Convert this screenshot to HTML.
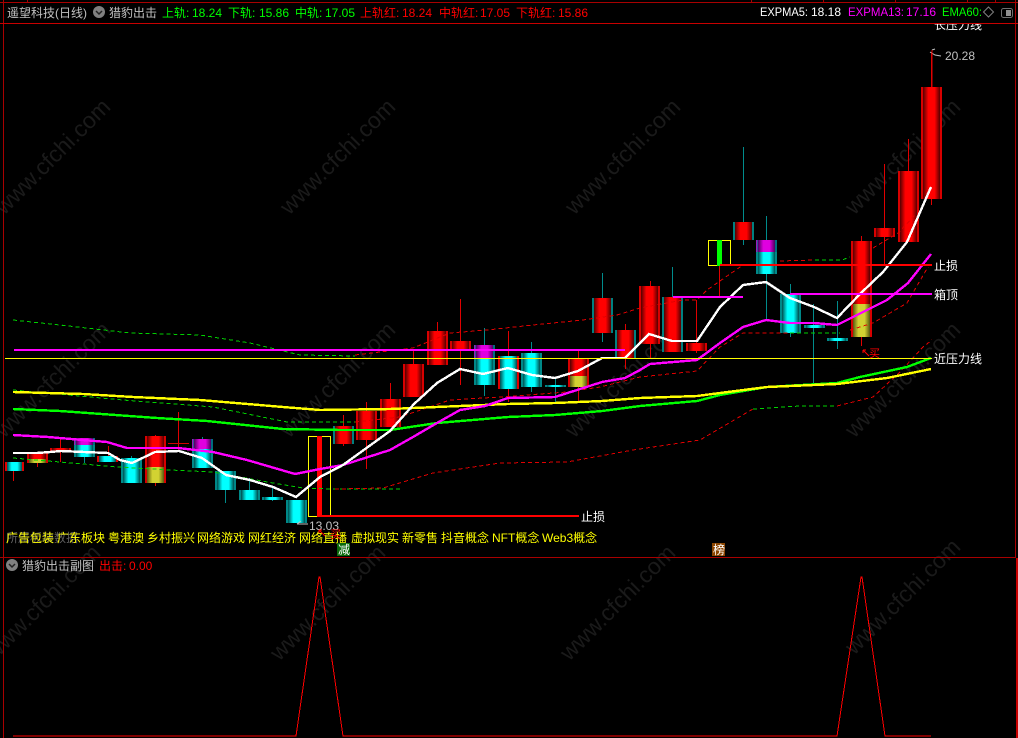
<!DOCTYPE html>
<html><head><meta charset="utf-8"><style>
html,body{margin:0;padding:0;background:#000;width:1018px;height:738px;overflow:hidden}
svg{position:absolute;left:0;top:0;display:block}
text{font-family:"Liberation Sans","WenQuanYi Zen Hei","Noto Sans CJK SC",sans-serif;font-size:12px;white-space:pre}
.wm text{font-size:23px;fill:#1a1a1a;letter-spacing:0}
.l{fill:none;shape-rendering:crispEdges}
.d{fill:none;stroke-width:1;stroke-dasharray:4 3;shape-rendering:crispEdges}
#c rect{shape-rendering:crispEdges}
.w{stroke-width:1;shape-rendering:crispEdges}
</style></head><body>
<svg width="1018" height="738" viewBox="0 0 1018 738" xmlns="http://www.w3.org/2000/svg">
<defs>
<linearGradient id="r"><stop offset="0" stop-color="#d80000"/><stop offset=".095" stop-color="#d80000"/><stop offset=".1" stop-color="#580000"/><stop offset=".35" stop-color="#ff0000"/><stop offset=".65" stop-color="#ff0000"/><stop offset=".9" stop-color="#580000"/><stop offset=".905" stop-color="#d80000"/><stop offset="1" stop-color="#d80000"/></linearGradient>
<linearGradient id="t"><stop offset="0" stop-color="#008080"/><stop offset=".095" stop-color="#008080"/><stop offset=".1" stop-color="#580000"/><stop offset=".35" stop-color="#ff0000"/><stop offset=".65" stop-color="#ff0000"/><stop offset=".9" stop-color="#580000"/><stop offset=".905" stop-color="#008080"/><stop offset="1" stop-color="#008080"/></linearGradient>
<linearGradient id="c"><stop offset="0" stop-color="#008888"/><stop offset=".095" stop-color="#008888"/><stop offset=".1" stop-color="#005050"/><stop offset=".35" stop-color="#00ffff"/><stop offset=".65" stop-color="#00ffff"/><stop offset=".9" stop-color="#005050"/><stop offset=".905" stop-color="#008888"/><stop offset="1" stop-color="#008888"/></linearGradient>
<linearGradient id="x"><stop offset="0" stop-color="#e00000"/><stop offset=".095" stop-color="#e00000"/><stop offset=".1" stop-color="#005050"/><stop offset=".35" stop-color="#00ffff"/><stop offset=".65" stop-color="#00ffff"/><stop offset=".9" stop-color="#005050"/><stop offset=".905" stop-color="#e00000"/><stop offset="1" stop-color="#e00000"/></linearGradient>
<linearGradient id="o"><stop offset="0" stop-color="#d80000"/><stop offset=".095" stop-color="#d80000"/><stop offset=".1" stop-color="#5a5a10"/><stop offset=".35" stop-color="#d2d232"/><stop offset=".65" stop-color="#d2d232"/><stop offset=".9" stop-color="#5a5a10"/><stop offset=".905" stop-color="#d80000"/><stop offset="1" stop-color="#d80000"/></linearGradient>
<linearGradient id="m"><stop offset="0" stop-color="#d000d0"/><stop offset=".095" stop-color="#006c80"/><stop offset=".1" stop-color="#500060"/><stop offset=".35" stop-color="#e000e0"/><stop offset=".65" stop-color="#e000e0"/><stop offset=".9" stop-color="#500060"/><stop offset=".905" stop-color="#006c80"/><stop offset="1" stop-color="#006c80"/></linearGradient>
</defs>
<rect width="1018" height="738" fill="#000"/>

<!-- watermark -->
<g class="wm" text-anchor="middle">
<text transform="translate(58,162) rotate(-45)">www.cfchi.com</text>
<text transform="translate(343,162) rotate(-45)">www.cfchi.com</text>
<text transform="translate(628,162) rotate(-45)">www.cfchi.com</text>
<text transform="translate(908,162) rotate(-45)">www.cfchi.com</text>
<text transform="translate(58,385) rotate(-45)">www.cfchi.com</text>
<text transform="translate(343,385) rotate(-45)">www.cfchi.com</text>
<text transform="translate(628,385) rotate(-45)">www.cfchi.com</text>
<text transform="translate(908,385) rotate(-45)">www.cfchi.com</text>
<text transform="translate(48,608) rotate(-45)">www.cfchi.com</text>
<text transform="translate(333,608) rotate(-45)">www.cfchi.com</text>
<text transform="translate(623,608) rotate(-45)">www.cfchi.com</text>
<text transform="translate(908,602) rotate(-45)">www.cfchi.com</text>
</g>

<!-- frame -->
<g fill="#a80000" style="shape-rendering:crispEdges">
<rect x="0" y="2" width="1018" height="1"/>
<rect x="0" y="23" width="1018" height="1" fill="#c80000"/>
<rect x="3" y="0" width="1" height="738"/>
<rect x="0" y="557" width="1016" height="1"/>
<rect x="1015" y="0" width="1" height="558"/>
<rect x="1016" y="558" width="2" height="180" fill="#c80000"/>
<rect x="27" y="0" width="1" height="2"/><rect x="751" y="0" width="1" height="2"/><rect x="823" y="0" width="1" height="2"/><rect x="895" y="0" width="1" height="2"/><rect x="967" y="0" width="1" height="2"/><rect x="995" y="0" width="1" height="2"/>
</g>

<!-- wicks -->
<g id="wicks" class="w">
<g stroke="#e00000">
<path d="M13.5 462V481M37.5 452V467M60.5 439V462M108.5 446V456M155.5 435V486M178.5 412V452M343.5 415V446M366.5 402V469M390.5 383V427M413.5 350V397M437.5 322V365M460.5 299V385M508.5 331V402M578.5 351V401M625.5 324V369M650.5 281V358M696.5 300V353M719.5 266V298M861.5 236V346M884.5 164V266M908.5 139V242M931.5 52V205"/>
</g>
<g stroke="#008c8c">
<path d="M84.5 438V463M131.5 456V483M202.5 437V468M225.5 471V503M249.5 478V500M272.5 486V501M484.5 328V396M531.5 342V392M555.5 377V402M602.5 273V342M672.5 267V297M743.5 147V245M766.5 216V319M790.5 284V337M813.5 304V383M837.5 301V349"/>
</g>
</g>

<!-- candles -->
<g id="c">
<rect x="5" y="462" width="19" height="9" fill="url(#x)"/>
<rect x="27" y="452" width="21" height="11" fill="url(#r)"/><rect x="27" y="459" width="21" height="4" fill="url(#o)"/>
<rect x="50" y="448" width="21" height="3" fill="url(#r)"/>
<rect x="74" y="438" width="21" height="19" fill="url(#c)"/><rect x="74" y="438" width="21" height="7" fill="url(#m)"/>
<rect x="97" y="456" width="21" height="6" fill="url(#x)"/>
<rect x="121" y="458" width="21" height="25" fill="url(#c)"/>
<rect x="145" y="436" width="21" height="31" fill="url(#r)"/><rect x="145" y="467" width="21" height="16" fill="url(#o)"/>
<rect x="168" y="443" width="21" height="1" fill="#d00000"/>
<rect x="192" y="439" width="21" height="29" fill="url(#c)"/><rect x="192" y="439" width="21" height="10" fill="url(#m)"/>
<rect x="215" y="471" width="21" height="19" fill="url(#c)"/>
<rect x="239" y="490" width="21" height="10" fill="url(#c)"/>
<rect x="262" y="497" width="21" height="3" fill="url(#c)"/>
<rect x="286" y="500" width="21" height="23" fill="url(#c)"/>
<rect x="333" y="426" width="21" height="18" fill="url(#t)"/>
<rect x="356" y="411" width="21" height="29" fill="url(#r)"/>
<rect x="380" y="399" width="21" height="28" fill="url(#r)"/>
<rect x="403" y="364" width="21" height="33" fill="url(#r)"/>
<rect x="427" y="331" width="21" height="34" fill="url(#r)"/>
<rect x="450" y="341" width="21" height="9" fill="url(#r)"/>
<rect x="474" y="345" width="21" height="40" fill="url(#c)"/><rect x="474" y="345" width="21" height="13" fill="url(#m)"/>
<rect x="498" y="356" width="21" height="33" fill="url(#x)"/>
<rect x="521" y="353" width="21" height="34" fill="url(#c)"/>
<rect x="545" y="385" width="21" height="2" fill="url(#c)"/>
<rect x="568" y="359" width="21" height="28" fill="url(#r)"/><rect x="568" y="376" width="21" height="11" fill="url(#o)"/>
<rect x="592" y="298" width="21" height="35" fill="url(#t)"/>
<rect x="615" y="330" width="21" height="28" fill="url(#t)"/>
<rect x="639" y="286" width="21" height="58" fill="url(#r)"/>
<rect x="662" y="297" width="21" height="55" fill="url(#t)"/>
<rect x="686" y="343" width="21" height="8" fill="url(#r)"/>
<rect x="733" y="222" width="21" height="18" fill="url(#t)"/>
<rect x="756" y="240" width="21" height="34" fill="url(#c)"/><rect x="756" y="240" width="21" height="12" fill="url(#m)"/>
<rect x="780" y="294" width="21" height="39" fill="url(#c)"/>
<rect x="804" y="325" width="21" height="3" fill="url(#c)"/>
<rect x="827" y="338" width="21" height="3" fill="url(#c)"/>
<rect x="851" y="241" width="21" height="63" fill="url(#r)"/><rect x="851" y="304" width="21" height="33" fill="url(#o)"/>
<rect x="874" y="228" width="21" height="9" fill="url(#r)"/>
<rect x="898" y="171" width="21" height="71" fill="url(#r)"/>
<rect x="921" y="87" width="21" height="112" fill="url(#r)"/>
<!-- signal boxes -->
<rect x="308.5" y="436.5" width="22" height="80" fill="none" stroke="#ffff00"/>
<rect x="317" y="436" width="5" height="81" fill="#ff0000"/>
<rect x="708.5" y="240.5" width="22" height="25" fill="none" stroke="#ffff00"/>
<rect x="717" y="240" width="5" height="26" fill="#00ff00"/>
</g>

<!-- dashed envelopes -->
<g>
<polyline class="d" stroke="#00d000" points="13,320 60,325 130,333 200,335 250,343 300,355 355,356"/>
<polyline class="d" stroke="#e00000" points="355,355 413,348 450,333 487,330 533,325 583,320 617,315 640,308 683,300 697,300 707,290 743,265"/>
<polyline class="d" stroke="#e00000" points="780,261 815,260"/>
<polyline class="d" stroke="#00d000" points="815,260 842,260 850,257"/>
<polyline class="d" stroke="#e00000" points="873,248 898,233 915,215"/>
<polyline class="d" stroke="#00d000" points="13,390 123,400 213,407 287,422 355,422"/>
<polyline class="d" stroke="#e00000" points="355,422 400,417 450,400 500,397 567,392 600,387 640,377 697,371 720,347 743,333 767,333 790,333"/>
<polyline class="d" stroke="#00d000" points="790,333 813,333 840,333"/>
<polyline class="d" stroke="#e00000" points="850,330 873,323 907,303 928,267"/>
<polyline class="d" stroke="#00d000" points="13,458 83,464 117,467 170,470 213,472 273,483 303,488 333,489 400,489"/>
<polyline class="d" stroke="#e00000" points="335,489 383,488 433,473 500,463 567,462 633,450 700,440 753,409"/>
<polyline class="d" stroke="#00d000" points="753,409 800,406 837,406"/>
<polyline class="d" stroke="#e00000" points="837,406 873,397 900,372 923,347 932,340"/>
</g>

<!-- thick moving averages -->
<polyline class="l" stroke="#00ff00" stroke-width="2.4" points="13,409 60,411 157,418 207,421 283,429 340,430 390,430 437,423 508,417 555,415 602,411 640,406 697,401 720,395 767,387 837,383 860,377 907,367 931,358"/>
<polyline class="l" stroke="#ffff00" stroke-width="2.4" points="13,392 83,394 133,397 200,400 283,407 320,410 390,409 460,406 508,404 555,403 602,401 640,398 697,396 720,393 767,387 837,384 887,378 931,369"/>
<polyline class="l" stroke="#ff00ff" stroke-width="2.4" points="13,435 48,437 83,440 107,442 127,448 178,448 213,452 247,460 295,474 320,469 343,465 390,450 413,437 437,423 460,410 485,406 508,398 555,397 602,382 625,378 640,370 650,364 697,360 720,343 743,327 766,320 790,323 814,323 837,325 861,313 887,300 908,283 931,254"/>
<polyline class="l" stroke="#ffffff" stroke-width="2.4" points="13,453 37,453 50,452 61,451 84,452 108,453 120,460 132,463 155,452 179,451 202,458 226,475 250,480 273,487 296,497 320,477 343,465 390,431 414,404 437,383 460,369 483,374 508,368 532,375 555,378 578,371 602,358 625,358 640,343 649,334 672,341 697,341 720,307 743,285 766,282 790,298 814,307 837,318 861,293 883,272 907,242 931,187"/>

<!-- horizontal levels -->
<g style="shape-rendering:crispEdges">
<rect x="14" y="349" width="611" height="2" fill="#ff00ff"/>
<rect x="5" y="358" width="927" height="1" fill="#ffff00"/>
<rect x="720" y="264" width="212" height="2" fill="#ff0000"/>
<rect x="673" y="296" width="70" height="2" fill="#ff00ff"/>
<rect x="790" y="293" width="142" height="2" fill="#ff00ff"/>
<rect x="320" y="515" width="259" height="2" fill="#ff0000"/>
</g>

<!-- level labels -->
<g fill="#ffffff">
<text x="934" y="29">长压力线</text>
<text x="934" y="270">止损</text>
<text x="934" y="299">箱顶</text>
<text x="934" y="363">近压力线</text>
<text x="581" y="521">止损</text>
</g>
<rect x="925" y="3" width="80" height="20" fill="#000"/>
<rect x="0" y="23" width="1018" height="1" fill="#c80000"/>
<g fill="#c0c0c0">
<text x="945" y="60">20.28</text>
<text x="309" y="530">13.03</text>
<path d="M932 50l3 -1M930 52l5 3 6 1" stroke="#c0c0c0" fill="none"/>
<path d="M297 524h11M297 524l4 -3" stroke="#c0c0c0" fill="none"/>
</g>
<path d="M932 50V87" stroke="#e00000"/>

<!-- header -->
<text x="7" y="17" fill="#c0c0c0">遥望科技(日线)</text>
<circle cx="99" cy="12" r="6" fill="#808080"/><path d="M96 11l3 3 3-3" stroke="#222" stroke-width="1.5" fill="none"/>
<text x="109" y="17" fill="#c0c0c0">猎豹出击</text>
<g fill="#00ff00">
<text x="162" y="17">上轨:</text><text x="192" y="17">18.24</text>
<text x="228" y="17">下轨:</text><text x="259" y="17">15.86</text>
<text x="295" y="17">中轨:</text><text x="325" y="17">17.05</text>
</g>
<g fill="#ff0000">
<text x="360" y="17">上轨红:</text><text x="402" y="17">18.24</text>
<text x="439" y="17">中轨红:</text><text x="480" y="17">17.05</text>
<text x="516" y="17">下轨红:</text><text x="558" y="17">15.86</text>
</g>
<text x="760" y="16" fill="#ffffff" textLength="48" lengthAdjust="spacingAndGlyphs">EXPMA5:</text><text x="811" y="16" fill="#ffffff">18.18</text>
<text x="848" y="16" fill="#ff00ff" textLength="56" lengthAdjust="spacingAndGlyphs">EXPMA13:</text><text x="906" y="16" fill="#ff00ff">17.16</text>
<text x="942" y="16" fill="#00ff00" textLength="40" lengthAdjust="spacingAndGlyphs">EMA60:</text>
<path d="M988.5 7l5 5-5 5-5-5z" fill="none" stroke="#808080"/>
<rect x="1001.5" y="8.5" width="11" height="9" rx="2" fill="none" stroke="#707070"/><rect x="1006" y="10" width="5" height="6" fill="#909090"/>

<!-- concepts -->
<text x="6" y="542" fill="#606060">所属板块数据</text>
<g fill="#ffff00">
<text x="6" y="542">广告包装</text>
<text x="57" y="542">广东板块</text>
<text x="108" y="542">粤港澳</text>
<text x="147" y="542">乡村振兴</text>
<text x="197" y="542">网络游戏</text>
<text x="248" y="542">网红经济</text>
<text x="299" y="542">网络直播</text>
<text x="351" y="542">虚拟现实</text>
<text x="402" y="542">新零售</text>
<text x="441" y="542">抖音概念</text>
<text x="492" y="542">NFT概念</text>
<text x="542" y="542">Web3概念</text>
</g>
<rect x="337" y="543" width="13" height="13" fill="#0a6a0a" style="shape-rendering:crispEdges"/><text x="338" y="554" fill="#fff">减</text>
<rect x="712" y="543" width="13" height="13" fill="#8b4500" style="shape-rendering:crispEdges"/><text x="713" y="554" fill="#fff">榜</text>
<text x="330" y="538" fill="#ff0000" style="font-size:11px">买</text>
<path d="M319 530l6 6M319 530h3M319 530v3" stroke="#ff0000" fill="none"/>
<text x="869" y="357" fill="#ff0000" style="font-size:11px">买</text>
<path d="M863 350l6 6M863 350h3M863 350v3" stroke="#ff0000" fill="none"/>

<!-- sub-chart -->
<circle cx="12" cy="565" r="6" fill="#808080"/><path d="M9 564l3 3 3-3" stroke="#222" stroke-width="1.5" fill="none"/>
<text x="22" y="570" fill="#c0c0c0">猎豹出击副图</text>
<text x="99" y="570" fill="#ff0000">出击:</text><text x="129" y="570" fill="#ff0000">0.00</text>
<polyline class="l" stroke="#ff0000" stroke-width="1" points="13,736 296,736 319,577 320,577 343,736 837,736 861,577 862,577 885,736 931,736"/>
</svg>
</body></html>
